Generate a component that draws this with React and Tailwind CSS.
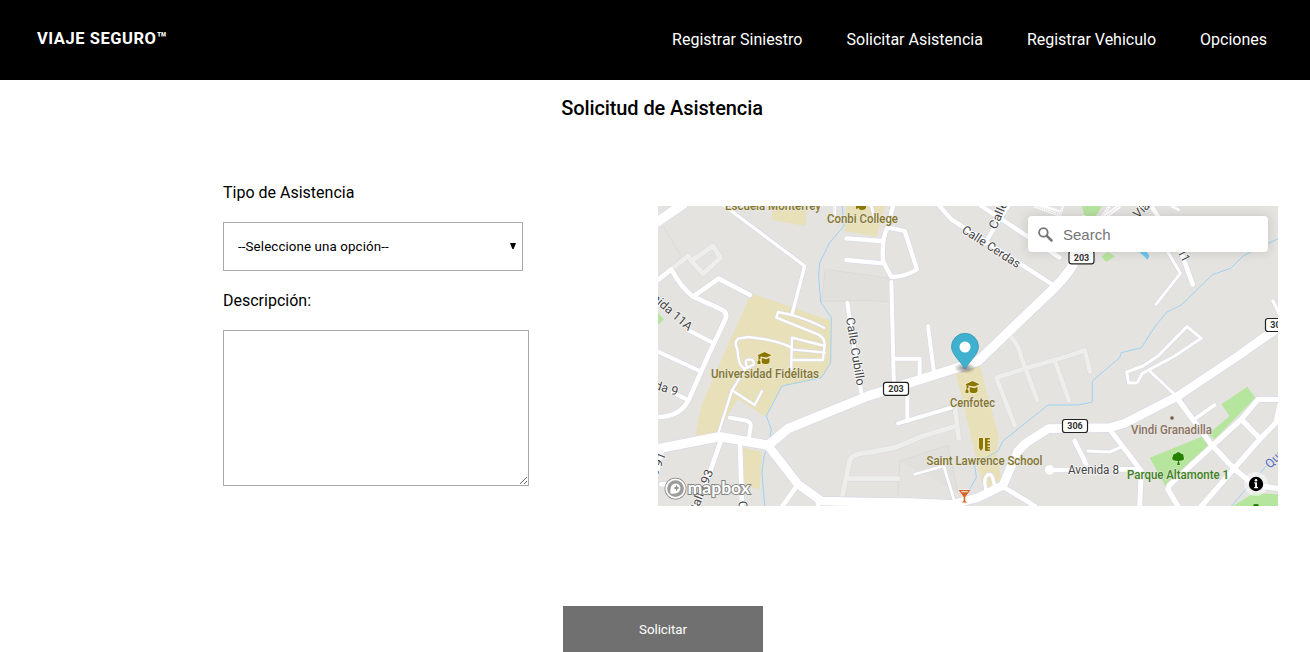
import React from 'react';

const links = ['Registrar Siniestro', 'Solicitar Asistencia', 'Registrar Vehiculo', 'Opciones'];

// Street geometry: [path, width]. Map units are thirds of a pixel.
const minorStreets = [
  ['M40 190L90 150L100 165L165 120L187 155L135 203L100 165', 14],
  ['M550 885L575 765Q580 744 630 740L710 725L795 690L895 660M890 600L902 697M575 818L720 818', 14],
  ['M1070 658L1015 515L1110 485L1230 450L1280 433L1296 497M1060 395Q1085 420 1090 455L1138 583M1190 462L1232 583', 13],
];
const streets = [
  ['M200 0L440 180L402 325', 10],
  ['M0 222L40 190Q70 245 105 272L190 310Q210 320 202 340L150 450L95 575Q70 633 0 633M105 272L182 218L276 267', 14],
  ['M90 372L160 408M0 437L125 495M45 560L90 582', 12],
  ['M498 365Q460 345 402 327L360 318L355 335L480 385Q500 395 500 415L495 462L400 462L402 395L500 420M400 430L500 440M400 460L400 490', 7],
  ['M402 425Q350 400 270 393L240 398Q228 410 238 430L240 450Q245 485 262 488L222 553L180 685M222 553L290 597L312 555M262 488L287 476Q290 460 272 460Q258 462 266 480', 7],
  ['M215 635L260 643Q280 647 278 662L273 695', 12],
  ['M190 700L155 800L118 900M246 715L252 900M10 835L50 835M12 730L-6 810M415 842L370 905M480 885L480 900', 14],
  ['M565 97L670 105M565 162L675 172M705 0L690 63Q670 95 675 165Q690 195 700 213Q745 212 777 190L740 75L692 65', 13],
  ['M568 290L578 360L610 560M700 228L708 545M810 360L828 500', 12],
  ['M708 458L785 458L785 520M748 550L748 645M720 652L880 605', 12],
  ['M770 805L857 780L890 888M640 0L650 38', 8],
  ['M845 0L880 40L1190 240M970 0L1205 155M1050 0L980 112', 13],
  ['M1480 0L1515 55L1570 140L1604 235', 14],
  ['M1525 130L1567 202L1494 295', 9],
  ['M1845 285L1870 335', 10],
  ['M985 860L980 828Q982 805 995 805Q1004 807 1007 828L1012 848', 10],
  ['M1040 845L1130 900M1175 792L1230 792M1370 790L1440 790M1250 705L1285 775', 14],
  ['M1290 735L1355 738L1385 725M1475 495L1555 570', 9],
  ['M1355 670L1450 795L1445 900', 15],
  ['M1500 450L1587 362L1630 397L1550 450L1453 502L1438 530L1412 531L1406 498L1455 480Z', 9],
  ['M1615 635L1670 597', 11],
  ['M1560 580L1660 715L1730 790L1790 838L1860 847M1870 580L1800 580L1750 640L1534 838L1530 850L1562 905M1750 640L1805 697M1865 600L1854 650L1805 700L1628 903', 16],
];
const avenues = [
  ['M-10 53L75 -5', 28],
  ['M0 728L185 692L330 718L390 668L630 570L890 488L960 465L1190 245Q1240 195 1255 155', 28],
  ['M330 718L420 835L490 885L630 888L750 890L880 895L960 875L1035 838L1060 780L1080 735L1105 710L1172 668L1355 665L1400 652L1560 570L1740 450L1860 365', 26],
];
const schools = 'M345 0L340 42L443 60L447 0ZM565 0L560 75L655 92L682 0ZM280 262L520 345L518 470L490 515L372 540L322 632L240 580L175 685L112 690L130 600L200 440ZM255 725L312 738L305 850L258 840ZM893 500L965 478L1022 690L1015 750L1035 835L980 860Z';
const parks = 'M1475 755L1650 685L1670 710L1525 845ZM1690 595L1768 542L1792 575L1670 700L1650 685L1715 630ZM1700 915L1790 860L1860 865L1860 915ZM0 320L18 340L0 357ZM1330 152L1350 138L1371 151L1345 168ZM1270 -5L1335 -5L1310 35L1280 30Z';
const streams = 'M553 0L558 60L515 110L485 170L482 210L488 288L520 335L518 470L490 515L372 540L325 630L340 670L332 715L318 750L312 800L320 900M1860 98L1755 150L1718 187L1663 206L1570 297L1527 318L1492 360L1450 425L1390 440L1385 455L1303 525L1303 588L1260 597L1170 597L1035 705L1020 735L950 775L955 815L935 850M1860 740L1720 900';

// Labels: [text, x, baseline, width, rotation, colour, weight]
const labels = [
  ['Escuela Monterrey', 67, 3.5, 96, 0, '#83752f', 500],
  ['Conbi College', 169, 17, 71, 0, '#83752f', 500],
  ['Universidad Fidélitas', 53, 172, 108, 0, '#83752f', 500],
  ['Cenfotec', 292, 201.3, 45, 0, '#83752f', 500],
  ['Saint Lawrence School', 268.5, 259, 116, 0, '#83752f', 500],
  ['Vindi Granadilla', 473, 228, 81, 0, '#8a7163', 500],
  ['Parque Altamonte 1', 469, 272.5, 102, 0, '#3d8223', 500],
  ['Avenida 8', 410, 267.5, 51, 0, '#454545', 400],
  ['Calle Cerdas', 303, 26, 67, 33, '#454545', 400],
  ['Calle Cubillo', 188, 112, 69, 81, '#454545', 400],
  ['Avenida 11A', -22, 80, 69, 41, '#454545', 400],
  ['Avenida 9', -33, 174, 54, 17, '#454545', 400],
  ['Calle 93', 38, 309, 47, -68, '#454545', 400],
  ['Calle 91', -9, 291, 46, -68, '#454545', 400],
  ['Calle', 80.5, 295, 28, 88, '#454545', 400],
  ['Calle', 338, 24, 29, -66, '#454545', 400],
  ['Vía 11', 480, 13, 35, -45, '#454545', 400],
  ['11', 519.5, 46, 12, 63, '#454545', 400],
  ['Quebrada', 612, 263, 53, -45, '#5570bf', 400],
];

function Shield({ x, y, label }) {
  return (
    <g>
      <rect x={x - 12.5} y={y - 6.5} width="25" height="13" rx="2.5" fill="#fff" stroke="#222" strokeWidth="1.2" />
      <text x={x} y={y + 3.3} textAnchor="middle" fontSize="9.5" fontWeight="700" fill="#333" textLength="15.5" lengthAdjust="spacingAndGlyphs">{label}</text>
    </g>
  );
}

function GraduationCap({ x, y }) {
  return (
    <g transform={`translate(${x} ${y})`} fill="#8b7600" stroke="#f3edcf" strokeWidth="1.2" paintOrder="stroke">
      <path d="M7 0L14 3.2L9 5.5L3 4.5V7H2V8.5L3 9.5V12H0V9.5L1 8.5V4L0 3.2Z" />
      <path d="M4.2 6L8.8 7.2L12 5.8V10Q11.5 12 8 12Q4.2 12 4.2 10Z" />
    </g>
  );
}

function StreetLayer({ items, color, casing }) {
  return (
    <g fill="none" strokeLinecap="round" strokeLinejoin="round">
      {items.map(([d, w]) => <path key={`c${d}`} d={d} stroke={casing} strokeWidth={w + 4} />)}
      {items.map(([d, w]) => <path key={d} d={d} stroke={color} strokeWidth={w} />)}
    </g>
  );
}

function MapDrawing() {
  return (
    <svg className="block" width="620" height="300" viewBox="0 0 620 300" fontFamily="Roboto, sans-serif">
      <rect width="620" height="300" fill="#e4e3e0" />
      <g transform="scale(.333333)">
        <path d="M502 190L630 207L700 218L700 288L640 284L490 286ZM725 765L870 718L900 860M725 765L720 870" fill="#e1e0dc" stroke="#d8d6d2" strokeWidth="2" />
        <path d="M15 60L70 150L40 190" fill="none" stroke="#d8d6d2" strokeWidth="2" />
        <path d={schools} fill="#e8e0b9" />
        <path d={parks} fill="#b6e59e" />
        <path d="M1441 136L1465 136L1474 150L1468 161L1460 152Z" fill="#6bc6ea" />
        <path d={streams} fill="none" stroke="#9ad0f3" strokeWidth="2.8" />
        <StreetLayer items={minorStreets} color="#eeeeeb" casing="#dddce1" />
        <StreetLayer items={[...streets, ...avenues]} color="#fff" casing="#d9d9e6" />
        <circle cx="1175" cy="792" r="14" fill="#fff" />
        <path d="M1310 55L1385 0" stroke="#fff" strokeWidth="13" />
        <path d="M1275 32L1325 42L1355 0M1128 0L1205 28L1215 0M1140 -5L1210 18M530 0L530 30M1540 0L1565 13" fill="none" stroke="#fff" strokeWidth="8" />
        <path d="M1128 0L1205 28L1215 0M1310 55L1385 0M1275 32L1325 42L1355 0M530 0L530 30M1285 0L1295 25L1325 20" fill="none" stroke="#c9c9d5" strokeWidth="2" strokeDasharray="4 3" />
      </g>
      {labels.map(([t, x, y, w, r, fill, weight], i) => (
        <text key={i} transform={`translate(${x} ${y}) rotate(${r})`} fontSize="12.2" fontWeight={weight} fill={fill} textLength={w} lengthAdjust="spacingAndGlyphs" stroke={fill === '#454545' ? '#fff' : '#ebe9e2'} strokeWidth="1.5" strokeOpacity=".8" paintOrder="stroke">{t}</text>
      ))}
      <Shield x={423.5} y={51.3} label="203" />
      <Shield x={238} y={182.8} label="203" />
      <Shield x={417} y={220} label="306" />
      <Shield x={620} y={119} label="306" />
      <GraduationCap x={99.5} y={146} />
      <GraduationCap x={307.5} y={175} />
      <path d="M198 0H208V2Q207 4 204 4Q201 4 201 2L198 3Z" fill="#8b7600" />
      <g fill="#8b7600" stroke="#f3edcf" strokeWidth="1" paintOrder="stroke">
        <path d="M321 232H325V242L323 245L321 242ZM327 232H332V233.5H329.5V235H332V236.5H329.5V238H332V239.5H329.5V241H332V242.5H329.5V243.5H332V245H327Z" />
      </g>
      <path d="M300.5 284H312.5L307.3 291V295L309.5 296.5H303.5L305.7 295V291ZM303 285.3L303.700 286.200H309.300L310 285.3Z" fill="#d4652a" fillRule="evenodd" stroke="#fff" strokeWidth=".8" paintOrder="stroke" />
      <circle cx="514" cy="212" r="2.2" fill="#7d5546" stroke="#eee" strokeWidth=".8" />
      <path d="M519 259L520 255L516 254.5Q513 253 515 250Q515 247.500 518 247.500Q520 244.500 523 247.500Q526 248 525.500 250.500Q527 254 524 254.500L521 255L522 259Z" fill="#268000" stroke="#e2f5d9" strokeWidth="1" paintOrder="stroke" />
      <path d="M595 300Q595 297.500 598 298Q601 297.500 601 300Z" fill="#268000" />
      {/* Marker */}
      <defs><radialGradient id="pinShadow"><stop offset="0" stopOpacity=".5" /><stop offset="1" stopOpacity="0" /></radialGradient></defs>
      <ellipse cx="307" cy="162" rx="11" ry="5.5" fill="url(#pinShadow)" />
      <path d="M307 163C304 157 293.500 148.500 293.500 140.800A13.500 13.500 0 0 1 320.500 140.800C320.500 148.500 310 157 307 163Z" fill="#3fb1ce" stroke="#3597b0" strokeWidth=".8" />
      <circle cx="307" cy="141" r="5.500" fill="#fff" />
      {/* Map provider mark */}
      <circle cx="17.500" cy="282.600" r="9.300" fill="none" stroke="#858585" strokeWidth="3.200" />
      <circle cx="17.500" cy="282.600" r="9.300" fill="#9c9c9b" stroke="#fff" strokeWidth="1.800" />
      <path d="M12.500 287.500Q11.500 280 15.500 278Q19.500 276.500 22 280Q23.500 284.500 19.500 286.800Q17 288 12.500 287.500Z" fill="#fff" />
      <path d="M18.500 278.600L19.400 281L21.700 282L19.400 283L18.500 285.200L17.600 283L15.300 282L17.600 281Z" fill="#8d8d8c" />
      <text x="29.500" y="287.800" fontFamily="Lato, sans-serif" fontSize="17" fontWeight="700" fill="#fff" stroke="#858585" strokeWidth="2" paintOrder="stroke" textLength="62.500" lengthAdjust="spacingAndGlyphs">mapbox</text>
      <circle cx="598" cy="278" r="12" fill="#fff" fillOpacity=".5" />
      <circle cx="598" cy="278" r="7.200" fill="#000" />
      <path d="M596.300 276.300H599V281H600V282.300H596.200V281H597.100V277.500H596.300Z" fill="#fff" />
      <circle cx="598" cy="274.200" r="1.250" fill="#fff" />
    </svg>
  );
}

export default function App() {
  return (
    <div className="h-[652px] overflow-hidden bg-white font-['Roboto',sans-serif] text-base text-black">
      <header className="flex h-20 items-center justify-between bg-black pr-[43px] pl-[37px] text-white">
        <span className="pb-0.5 text-[16.5px] leading-5 font-bold tracking-[0.55px]">VIAJE SEGURO™</span>
        <nav className="flex gap-11">
          {links.map((l) => <a key={l} href="#" className="leading-6">{l}</a>)}
        </nav>
      </header>
      <h1 className="mt-4 ml-[14px] text-center text-xl leading-6 font-medium tracking-[-0.1px]">Solicitud de Asistencia</h1>
      <main className="flex h-[486px] pl-[223px]">
        <form className="flex w-[435px] flex-col items-start pt-[61px]">
          <label htmlFor="tipo" className="leading-6">Tipo de Asistencia</label>
          <div className="relative mt-[17px]">
            <select id="tipo" className="block h-[49px] w-[300px] appearance-none border border-[#a9a9a9] bg-white pl-[14px] text-[13.333px] tracking-[0.11px]">
              <option>--Seleccione una opción--</option>
            </select>
            <svg className="pointer-events-none absolute top-[21px] right-[7px]" width="6" height="6" viewBox="0 0 6 6"><path d="M0 0H6L3.600 6H2.400Z" /></svg>
          </div>
          <label htmlFor="descripcion" className="mt-[18px] leading-6">Descripción:</label>
          <textarea id="descripcion" className="mt-[17px] block h-[156px] w-[306px] border border-[#a9a9a9]" />
        </form>
        <section className="relative mt-[86px] h-[300px] w-[620px] overflow-hidden">
          <MapDrawing />
          <div className="absolute top-[10px] right-[10px] flex h-9 w-60 items-center rounded bg-white pl-[10px] shadow-[0_0_10px_2px_rgba(0,0,0,0.1)]">
            <svg width="15" height="15" viewBox="0 0 15 15" fill="none" stroke="#757575"><circle cx="5.400" cy="5.400" r="4.300" strokeWidth="1.800" /><path d="M8.800 8.800L13.500 13.500" strokeWidth="2.500" strokeLinecap="round" /></svg>
            <input placeholder="Search" className="mt-0.5 ml-[10px] w-48 font-['Liberation_Sans',Arial,sans-serif] text-[15px] outline-none placeholder:text-[#757575]" />
          </div>
        </section>
      </main>
      <button className="ml-[563px] block h-[47px] w-[200px] bg-[#707070] text-[13.333px] tracking-[-0.05px] text-white">Solicitar</button>
    </div>
  );
}
